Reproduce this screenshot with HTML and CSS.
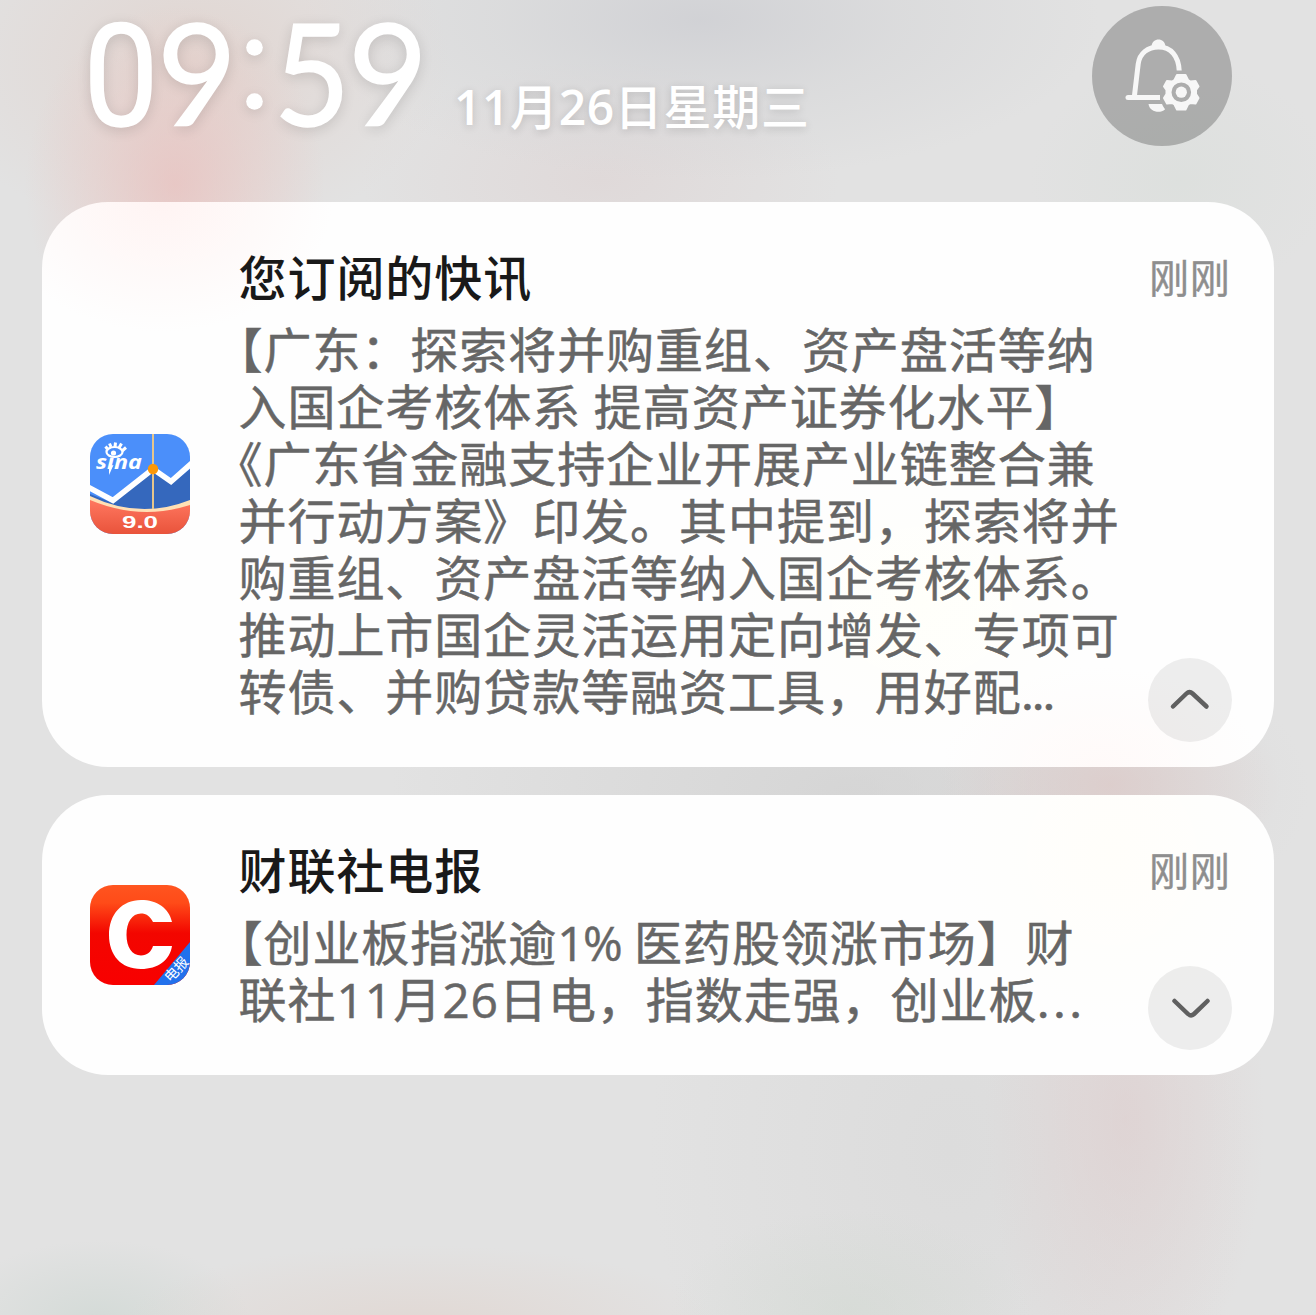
FILE: index.html
```html
<!DOCTYPE html>
<html lang="zh-CN">
<head>
<meta charset="utf-8">
<title>通知中心</title>
<link rel="stylesheet" href="styles.css">
</head>
<body>
<main class="shade">
  <header class="header">
    <div class="clock"><span class="digit zero">0</span><span class="digit nine">9</span><svg class="colon" viewBox="0 0 17 72" aria-hidden="true"><circle cx="8.500" cy="8.500" r="8.300"/><circle cx="8.500" cy="62.500" r="8.300"/></svg><span class="digit five">5</span><span class="digit nine">9</span></div>
    <div class="date"><span class="num">11</span>月<span class="num">26</span>日星期三</div>
    <button class="settings" aria-label="通知设置">
      <svg viewBox="0 0 140 140">
        <g fill="none" stroke="#f7f7f7" stroke-width="5">
          <path d="M36 91.500H68"/>
          <path d="M42.300 91L46.200 58C47.600 47 56 41 66.500 41C79 41 86.500 50 87.200 64.500"/>
        </g>
        <circle cx="36" cy="91.500" r="2.500" fill="#f7f7f7"/>
        <path fill="#f7f7f7" d="M59.500 40.500C60 31 73 31 73.500 40.500ZM56.500 98H70C71 100.500 72.500 102 73 103.500C68 108 57.500 106 56.500 98Z"/>
        <path fill="#f7f7f7" fill-rule="evenodd" stroke="#f7f7f7" stroke-width="2" stroke-linejoin="round" d="M85 69H93.500L96 74L98.500 75.500L103.500 75L106.500 80.500L104 84V88L106.500 92L103.500 97.500L98.500 97L96 98.500L93.500 103.500H85L82.500 98.500L80 97L75 97.500L72 92L74.500 88V84L72 80.500L75 75L80 75.500L82.500 74ZM89.300 75.400A10.800 10.800 0 1 0 89.300 97A10.800 10.800 0 1 0 89.300 75.400Z"/>
        <circle cx="89.300" cy="86.200" r="5.600" fill="#f7f7f7"/>
      </svg>
    </button>
  </header>

  <article class="card card-news">
    <svg class="app-icon" viewBox="0 0 100 100" role="img" aria-label="新浪财经">
      <defs>
        <clipPath id="tile"><rect width="100" height="100" rx="23"/></clipPath>
        <linearGradient id="coral" x2="0" y2="1"><stop stop-color="#ff7860"/><stop offset="1" stop-color="#e9533b"/></linearGradient>
        <linearGradient id="red" x2="0" y2="1"><stop stop-color="#ff5520"/><stop offset=".18" stop-color="#ff4b18"/><stop offset=".48" stop-color="#f30600"/><stop offset="1" stop-color="#f80000"/></linearGradient>
      </defs>
      <g clip-path="url(#tile)">
        <path fill="#4b8ffa" d="M0 0H100V100H0Z"/>
        <path fill="#3568bd" d="M0 60L23 69L63 38L81 50L100 35V80H0Z"/>
        <path fill="none" stroke="#fff" stroke-width="5.500" d="M-2 53L23 66.500L63 35L81 47.500L102 29"/>
        <path fill="#ffe0b5" d="M0 62Q50 86 100 66V82H0Z"/>
        <path fill="url(#coral)" d="M0 66Q50 87 100 71V100H0Z"/>
        <path stroke="#e6c68c" stroke-width="2" d="M63 0V75"/>
        <circle cx="63" cy="35" r="5.200" fill="#fc9808"/>
        <text class="sina" x="6" y="34.500" textLength="46" lengthAdjust="spacingAndGlyphs">sina</text>
        <ellipse cx="24.500" cy="18" rx="8" ry="5" fill="#4b8ffa" stroke="#fff" stroke-width="2.200"/>
        <circle cx="23.500" cy="19" r="2.600" fill="#fff"/>
        <path fill="none" stroke="#fff" stroke-width="3" d="M17.500 15L15.500 12.500M21 13L19.500 9.500M25 13L25.500 8.500M29 14L31.500 9.500M32 17L36 13.500"/>
        <path fill="#fff" d="M19 32L23.500 31L19 41Z"/>
        <text class="version" x="32" y="93.500" textLength="36" lengthAdjust="spacingAndGlyphs">9.0</text>
      </g>
    </svg>
    <div class="content">
      <h2 class="title">您订阅的快讯</h2>
      <p class="body">
        <span class="line hang">【广东：探索将并购重组、资产盘活等纳</span>
        <span class="line">入国企考核体系 提高资产证券化水平】</span>
        <span class="line hang">《广东省金融支持企业开展产业链整合兼</span>
        <span class="line">并行动方案》印发。其中提到，探索将并</span>
        <span class="line">购重组、资产盘活等纳入国企考核体系。</span>
        <span class="line">推动上市国企灵活运用定向增发、专项可</span>
        <span class="line">转债、并购贷款等融资工具，用好配<span class="dots">...</span></span>
      </p>
    </div>
    <div class="side">
      <time class="when">刚刚</time>
      <button class="toggle" aria-label="收起"><svg viewBox="0 0 84 84"><path d="M25 48.500L38.500 35.500Q41.500 32.700 44.500 35.500L58.500 48.500"/></svg></button>
    </div>
  </article>

  <article class="card card-wire">
    <svg class="app-icon" viewBox="0 0 100 100" role="img" aria-label="财联社">
      <g clip-path="url(#tile)">
        <path fill="url(#red)" d="M0 0H100V100H0Z"/>
        <path fill="#2271ec" d="M100 57V100H64Z"/>
        <path fill="#fff" d="M82 37H63C60 31 56 28.500 51 28.500C42 28.500 36.500 37 36.500 50C36.500 62 42 70.500 51 70.500C57 70.500 61 67 63 61H82C80 75 68 84 51 84C31 84 19 70 19 50C19 29 32 15 51 15C67 15 79 23 82 37Z"/>
        <text class="ribbon" transform="translate(80.500 98) rotate(-47)">电报</text>
      </g>
    </svg>
    <div class="content">
      <h2 class="title">财联社电报</h2>
      <p class="body">
        <span class="line hang">【创业板指涨逾<span class="num percent">1%</span> 医药股领涨市场】财</span>
        <span class="line">联社<span class="num">11</span>月<span class="num">26</span>日电，指数走强，创业板<span class="dots wide">...</span></span>
      </p>
    </div>
    <div class="side">
      <time class="when">刚刚</time>
      <button class="toggle" aria-label="展开"><svg viewBox="0 0 84 84"><path d="M26.500 35L40 48Q43 50.800 46 48L59.500 35"/></svg></button>
    </div>
  </article>
</main>
</body>
</html>
```

FILE: styles.css
```css
* { box-sizing: border-box; }

body {
  margin: 0;
  font-family: "Noto Sans CJK SC", sans-serif;
  background: #e0e0e0;
}

.shade {
  display: flex;
  flex-direction: column;
  gap: 28px;
  width: 1316px;
  height: 1315px;
  padding: 0 42px;
  overflow: hidden;
  background:
    radial-gradient(ellipse 150px 180px at 175px 185px, rgba(234, 190, 187, .7), rgba(234, 196, 192, .4) 50%, rgba(234, 204, 200, 0)),
    radial-gradient(ellipse 260px 180px at 190px 60px, rgba(224, 204, 196, .6), rgba(225, 208, 202, .35) 50%, rgba(225, 214, 210, 0)),
    radial-gradient(ellipse 400px 160px at 700px 20px, rgba(202, 203, 208, .7), rgba(206, 207, 210, .35) 50%, rgba(212, 212, 214, 0)),
    radial-gradient(ellipse 240px 120px at 600px 180px, rgba(220, 206, 206, .45), rgba(220, 212, 212, 0)),
    radial-gradient(ellipse 150px 120px at 1180px 180px, rgba(212, 220, 214, .35), rgba(215, 220, 215, 0)),
    radial-gradient(ellipse 170px 110px at 1110px 785px, rgba(220, 198, 196, .65), rgba(220, 206, 204, 0)),
    radial-gradient(ellipse 140px 280px at 1125px 1120px, rgba(222, 204, 204, .6), rgba(222, 211, 211, 0)),
    radial-gradient(ellipse 300px 80px at 420px 1325px, rgba(224, 208, 200, .55), rgba(224, 212, 206, 0)),
    radial-gradient(ellipse 150px 80px at 100px 1320px, rgba(200, 212, 206, .55), rgba(206, 214, 209, 0)),
    radial-gradient(ellipse 180px 100px at 850px 1310px, rgba(206, 215, 206, .45), rgba(210, 215, 210, 0)),
    radial-gradient(ellipse 460px 200px at 850px 790px, rgba(205, 205, 205, .6), rgba(212, 212, 212, 0)),
    radial-gradient(ellipse 300px 400px at 950px 1150px, rgba(214, 214, 214, .5), rgba(218, 218, 218, 0)),
    #e2e2e2;
}

.header {
  display: flex;
  align-items: flex-start;
  height: 174px;
  padding: 6px 42px 0 40.500px;
  color: #fff;
}

.clock {
  display: flex;
  align-items: baseline;
  height: 140px;
  margin-top: -5px;
  font: 400 142px/140px Lato, sans-serif;
  -webkit-text-stroke: 1.500px #fff;
  text-shadow: 0 3px 14px rgba(0, 0, 0, .15);
}

.digit {
  display: flex;
  justify-content: center;
  width: 76px;
}

.zero { font-family: Roboto, sans-serif; transform: scaleX(.94); }
.nine { transform: scaleX(.97); }
.five { transform: scaleX(.93); }

.colon {
  align-self: flex-start;
  width: 17px;
  height: 72px;
  margin: 38px 11px 0 11.500px;
  fill: #fff;
  filter: drop-shadow(0 3px 6px rgba(0, 0, 0, .12));
}

.date {
  margin: 63px 0 0 28px;
  font-size: 48px;
  font-weight: 500;
  line-height: 70px;
  letter-spacing: .8px;
  white-space: nowrap;
  text-shadow: 0 2px 8px rgba(0, 0, 0, .16);
}

.num { font-family: "Open Sans", sans-serif; }
.date .num { font-weight: 600; letter-spacing: .5px; }
.percent { letter-spacing: -1.500px; }

.settings {
  flex: none;
  width: 140px;
  height: 140px;
  margin-left: auto;
  padding: 0;
  border: 0;
  border-radius: 50%;
  background: rgba(80, 80, 80, .36);
}

.settings svg, .toggle svg { display: block; width: 100%; height: 100%; }

.card {
  display: flex;
  flex: none;
  align-items: center;
  padding: 0 42px 0 48px;
  border-radius: 66px;
}

.card-news {
  height: 565px;
  padding-bottom: 2px;
  background:
    radial-gradient(ellipse 170px 130px at 120px 0, #fff4f3, rgba(255, 249, 249, 0)),
    radial-gradient(ellipse 180px 150px at 880px 400px, #fffffa, rgba(255, 255, 252, 0)),
    radial-gradient(ellipse 160px 100px at 1060px 565px, #fffaf9, rgba(255, 252, 252, 0)),
    #fefefe;
}

.card-wire {
  height: 280px;
  background:
    radial-gradient(ellipse 170px 180px at 1070px 60px, #fffefa, rgba(255, 255, 252, 0)),
    #fefefe;
}

.app-icon { flex: none; width: 100px; height: 100px; }

.sina { font: italic 700 19px "Open Sans", sans-serif; fill: #fff; }
.version { font: 700 16px "Liberation Sans", sans-serif; fill: #fff; }
.ribbon { font: 400 14px "Noto Sans CJK SC", sans-serif; fill: #fff; }

.content {
  flex: 1;
  align-self: stretch;
  padding: 41px 0 0 48.500px;
}

.title {
  margin: 0 0 12px;
  font-size: 48px;
  font-weight: 500;
  line-height: 64px;
  letter-spacing: .95px;
  color: #191919;
}

.body {
  margin: 0;
  font-size: 48px;
  line-height: 57px;
  letter-spacing: .95px;
  color: #666;
  -webkit-text-stroke: .5px #666;
}

.line { display: block; height: 57px; white-space: nowrap; word-spacing: 1px; text-spacing-trim: space-all; }
.hang { text-indent: -24px; }
.dots { font-family: Lato, sans-serif; letter-spacing: -.5px; }
.wide { letter-spacing: 5px; }

.side {
  display: flex;
  flex: none;
  flex-direction: column;
  align-items: flex-end;
  justify-content: space-between;
  align-self: stretch;
  width: 84px;
  padding: 44px 0 25px;
}

.card-news .side { padding-bottom: 23px; }

.when {
  margin-right: 1.500px;
  font-size: 40px;
  line-height: 60px;
  letter-spacing: .8px;
  white-space: nowrap;
  color: #8e8e8e;
  -webkit-text-stroke: .4px #8e8e8e;
}

.toggle {
  width: 84px;
  height: 84px;
  padding: 0;
  border: 0;
  border-radius: 50%;
  background: rgba(0, 0, 0, .065);
}

.toggle path {
  fill: none;
  stroke: #606060;
  stroke-width: 4.500;
  stroke-linecap: round;
}
```
